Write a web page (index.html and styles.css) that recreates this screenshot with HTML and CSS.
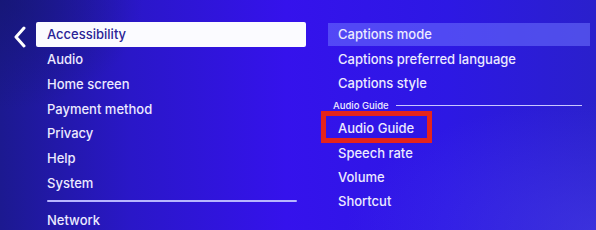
FILE: index.html
```html
<!DOCTYPE html>
<html lang="en">
<head>
  <meta charset="UTF-8">
  <meta name="viewport" content="width=device-width, initial-scale=1.0">
  <link rel="stylesheet" href="styles.css">
  <title>Settings - Accessibility</title>
</head>
<body>
  <div class="screen">
    <div class="back">
      <svg width="14" height="22" viewBox="0 0 14 22">
        <polyline points="10,2 2,11 10,20" fill="none" stroke="#fff" stroke-width="3" stroke-linecap="round" stroke-linejoin="round"/>
      </svg>
    </div>

    <!-- Main settings menu -->
    <nav class="menu">
      <div class="item selected">Accessibility</div>
      <div class="item">Audio</div>
      <div class="item">Home screen</div>
      <div class="item">Payment method</div>
      <div class="item">Privacy</div>
      <div class="item">Help</div>
      <div class="item">System</div>
      <div class="divider"></div>
      <div class="item">Network</div>
    </nav>

    <!-- Accessibility sub menu -->
    <section class="submenu">
      <div class="sub-item focused">Captions mode</div>
      <div class="sub-item">Captions preferred language</div>
      <div class="sub-item">Captions style</div>
      <div class="group-label">
        <span>Audio Guide</span>
        <div class="group-line"></div>
      </div>
      <div class="sub-item marked">Audio Guide</div>
      <div class="sub-item">Speech rate</div>
      <div class="sub-item">Volume</div>
      <div class="sub-item">Shortcut</div>
    </section>
  </div>
</body>
</html>
```

FILE: styles.css
```css
html, body {
  margin: 0;
  height: 100%;
}

body {
  font-family: Inter, "Open Sans", sans-serif;
  background:
    radial-gradient(ellipse 60% 80% at 100% 100%, rgba(80, 70, 240, 0.45), transparent 70%),
    radial-gradient(ellipse 30% 60% at 0% 0%, rgba(20, 22, 110, 0.7), transparent 80%),
    linear-gradient(90deg, #1c1990 0%, #2a17c8 22%, #3512ec 48%, #2d18e4 75%, #2a20cc 100%);
  overflow: hidden;
}

.screen {
  display: flex;
  padding-top: 22px;
  color: #eceaff;
  font-size: 13px;
  font-weight: 500;
}

.back {
  width: 36px;
  padding: 4px 0 0 14px;
  box-sizing: border-box;
}

.menu {
  width: 270px;
  display: flex;
  flex-direction: column;
}

.item {
  height: 24.8px;
  line-height: 24.8px;
  padding-left: 11px;
  white-space: nowrap;
}

.item.selected {
  background: #fbfbff;
  color: #2a2396;
  border-radius: 2px;
  height: 25px;
  line-height: 25px;
}

.divider {
  height: 2px;
  margin: 4px 9px 6px 11px;
  background: #b8b6ff;
  border-radius: 1px;
}

.submenu {
  width: 262px;
  margin-left: 22px;
  padding-top: 1px;
  display: flex;
  flex-direction: column;
}

.sub-item {
  position: relative;
  height: 24.2px;
  line-height: 24.2px;
  padding-left: 10px;
  white-space: nowrap;
}

.sub-item.focused {
  background: rgba(110, 115, 255, 0.55);
  height: 23px;
  line-height: 23px;
  margin-bottom: 1px;
}

/* red annotation box */
.sub-item.marked::after {
  content: "";
  position: absolute;
  left: -7px;
  top: -5px;
  width: 101px;
  height: 22px;
  border: 5px solid #e5241c;
}

.group-label {
  display: flex;
  align-items: center;
  height: 21px;
  padding-left: 5px;
  padding-right: 8px;
  font-size: 9.5px;
  font-weight: 500;
  gap: 7px;
}

.group-line {
  flex: 1;
  height: 1px;
  background: #c9c7ff;
}
```
